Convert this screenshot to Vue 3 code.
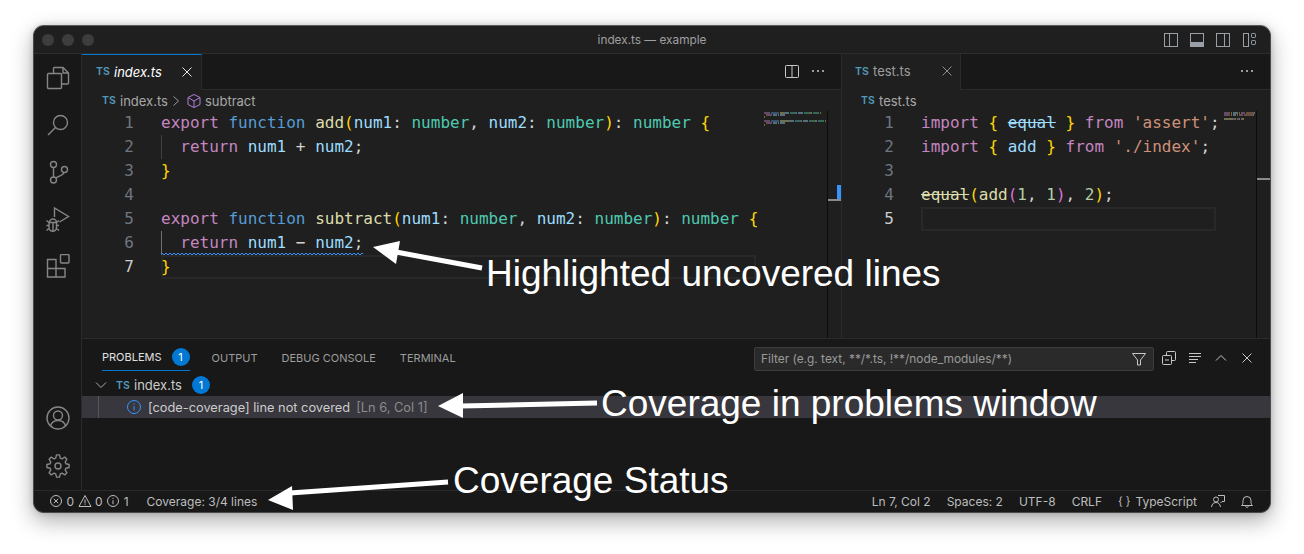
<script setup>
const T = (c, t) => ({ c, t })
const sig = (name) => [
  T('kw', 'export '), T('st', 'function '), T('fn', name), T('br', '('),
  T('va', 'num1'), T('pl', ': '), T('ty', 'number'), T('pl', ', '),
  T('va', 'num2'), T('pl', ': '), T('ty', 'number'), T('br', ')'),
  T('pl', ': '), T('ty', 'number'), T('pl', ' '), T('br', '{'),
]
const leftLines = [
  { tokens: sig('add') },
  { indent: true, tokens: [T('kw', 'return '), T('va', 'num1'), T('pl', ' + '), T('va', 'num2'), T('pl', ';')] },
  { tokens: [T('br', '}')] },
  { tokens: [] },
  { tokens: sig('subtract') },
  { indent: true, active: true, squiggle: true, tokens: [T('kw', 'return '), T('va', 'num1'), T('pl', ' − '), T('va', 'num2'), T('pl', ';')] },
  { current: true, tokens: [T('br', '}')] },
]
const rightLines = [
  { tokens: [T('kw', 'import '), T('br', '{ '), T('va del', 'equal'), T('br', ' }'), T('kw', ' from '), T('str', "'assert'"), T('pl', ';')] },
  { tokens: [T('kw', 'import '), T('br', '{ '), T('va', 'add'), T('br', ' }'), T('kw', ' from '), T('str', "'./index'"), T('pl', ';')] },
  { tokens: [] },
  { tokens: [T('fn del', 'equal'), T('br', '('), T('fn', 'add'), T('br2', '('), T('nu', '1'), T('pl', ', '), T('nu', '1'), T('br2', ')'), T('pl', ', '), T('nu', '2'), T('br', ')'), T('pl', ';')] },
  { current: true, tokens: [] },
]
const panelTabs = ['OUTPUT', 'DEBUG CONSOLE', 'TERMINAL']

const miniColors = { kw: '#c586c0', st: '#569cd6', fn: '#dcdcaa', va: '#9cdcfe', ty: '#4ec9b0', br: '#ffd700', br2: '#da70d6', str: '#ce9178', nu: '#b5cea8', pl: '#d4d4d4' }
// one minimap pixel per character, two pixels per line
function minimap(lines) {
  const rects = []
  lines.forEach((line, y) => {
    let x = line.indent ? 2 : 0
    line.tokens.forEach((tok) => {
      for (const m of tok.t.matchAll(/\S+/g)) {
        rects.push({ x: x + m.index, y: y * 2, w: m[0].length, fill: miniColors[tok.c.split(' ')[0]] })
      }
      x += tok.t.length
    })
  })
  return rects
}
const leftMini = minimap(leftLines)
const rightMini = minimap(rightLines)

// settings gear outline: eight teeth around a centre of (12, 12)
function gearPath() {
  const pts = []
  const teeth = 8
  for (let i = 0; i < teeth; i++) {
    const a = (i * 2 * Math.PI) / teeth - Math.PI / 2
    const step = (2 * Math.PI) / teeth
    const at = (r, da) => `${(12 + r * Math.cos(a + da)).toFixed(2)} ${(12 + r * Math.sin(a + da)).toFixed(2)}`
    pts.push(at(8.2, -step * 0.36), at(11.2, -step * 0.17), at(11.2, step * 0.17), at(8.2, step * 0.36))
  }
  return 'M' + pts.join('L') + 'Z'
}
const gear = gearPath()
</script>

<template>
  <div class="page">
    <div class="window">
      <header class="titlebar">
        <div class="lights"><i></i><i></i><i></i></div>
        <div class="title">index.ts — example</div>
        <div class="layout-icons">
          <svg width="16" height="16" viewBox="0 0 16 16" fill="none" stroke="#9a9fa8"><rect x="1.500" y="1.500" width="13" height="13"/><path d="M6.500 1.500v13"/></svg>
          <svg width="16" height="16" viewBox="0 0 16 16" fill="none" stroke="#9a9fa8"><rect x="1.500" y="1.500" width="13" height="13"/><path d="M1.500 10.500h13v4h-13z" fill="#9a9fa8"/></svg>
          <svg width="16" height="16" viewBox="0 0 16 16" fill="none" stroke="#9a9fa8"><rect x="1.500" y="1.500" width="13" height="13"/><path d="M9.500 1.500v13"/></svg>
          <svg width="16" height="16" viewBox="0 0 16 16" fill="none" stroke="#9a9fa8"><rect x="2.500" y="1.500" width="5" height="13"/><rect x="10.500" y="1.500" width="4" height="4" rx=".8"/><rect x="10.500" y="8.500" width="4" height="4" rx=".8"/></svg>
        </div>
      </header>

      <div class="main">
        <nav class="activity">
          <div class="activity-top">
            <svg width="24" height="24" viewBox="0 0 24 24" fill="none"><path d="M7.500 7V2.500a1 1 0 0 1 1-1h8.500l5.500 5.500v10a1 1 0 0 1-1 1h-6.500M17 1.500V7h5.500"/><rect x="1.500" y="7.500" width="14" height="15" rx="1"/></svg>
            <svg width="24" height="24" viewBox="0 0 24 24" fill="none"><circle cx="14.500" cy="9.500" r="7"/><path d="M9.500 14.500 2 22"/></svg>
            <svg width="24" height="24" viewBox="0 0 24 24" fill="none"><circle cx="7.500" cy="4.500" r="3"/><circle cx="7.500" cy="20" r="3"/><circle cx="18.500" cy="9.500" r="3"/><path d="M7.500 7.500v9.500M18 12.500c-.5 3-5.500 3.500-8 5.500"/></svg>
            <svg width="24" height="25" viewBox="0 0 24 25" fill="none"><path d="M8.500 10V1l14 8.500-9 5.500"/><path d="M3.500 15.500a3.500 3.500 0 0 1 7 0zM3 15.500v5a3.500 3.500 0 0 0 7.500 0v-5M7 15.500v8.500M.5 13.500l2.500 2M13 13.500l-2.500 2M.5 18.500H3M10.500 18.500H13M.5 23.500 3.500 21M13 23.500 10 21"/></svg>
            <svg class="ext" width="24" height="24" viewBox="0 0 24 24" fill="none"><path d="M1.500 5.500H10v9h9v8.500H1.500zM1.500 14.500H10V23"/><rect x="14.500" y=".5" width="8.500" height="8.500" rx="1"/></svg>
          </div>
          <div class="activity-bottom">
            <svg width="24" height="24" viewBox="0 0 24 24" fill="none"><circle cx="12" cy="12" r="11"/><circle cx="12" cy="9.500" r="4.500"/><path d="M4.500 20c1-4 4-5.500 7.500-5.500s6.500 1.500 7.500 5.500"/></svg>
            <svg width="24" height="24" viewBox="0 0 24 24" fill="none" stroke-linejoin="round"><circle cx="12" cy="12" r="3"/><path :d="gear"/></svg>
          </div>
        </nav>

        <div class="workspace">
          <div class="editors">
            <section class="group group-left">
              <div class="tabs">
                <div class="tab active"><span class="ts">TS</span><em>index.ts</em>
                  <svg class="close" width="16" height="16" viewBox="0 0 16 16" fill="none" stroke="#e8e8e8"><path d="m3.500 3.500 9 9M12.500 3.500l-9 9"/></svg>
                </div>
                <div class="tabs-actions">
                  <svg width="16" height="16" viewBox="0 0 16 16" fill="none" stroke="#c8c8c8"><rect x="1.500" y="2.500" width="13" height="12" rx=".8"/><path d="M8 2.500v12"/></svg>
                  <svg width="16" height="16" viewBox="0 0 16 16" fill="#c8c8c8"><circle cx="3" cy="8" r="1"/><circle cx="8" cy="8" r="1"/><circle cx="13" cy="8" r="1"/></svg>
                </div>
              </div>
              <div class="crumbs"><span class="ts">TS</span><span>index.ts</span>
                <svg width="10" height="14" viewBox="0 0 10 14" fill="none" stroke="#9a9a9a"><path d="m2.500 2.500 5 4.500-5 4.500"/></svg>
                <svg class="cube" width="16" height="16" viewBox="0 0 16 16" fill="none" stroke="#b180d7"><path d="M8 1.500 14 4.500v7l-6 3-6-3v-7zM2 4.500 8 8l6-3.500M8 8v6.500"/></svg>
                <span>subtract</span></div>
              <div class="editor-body">
                <div class="numbers"><div v-for="(l, i) in leftLines" :key="i" :class="{ 'num-current': l.current }">{{ i + 1 }}</div></div>
                <div class="code">
                  <div v-for="(l, i) in leftLines" :key="i" class="line" :class="{ current: l.current }">
                    <span class="line-text"><span v-if="l.indent" class="indent" :class="{ 'indent-active': l.active }"></span><span v-for="(t, j) in l.tokens" :key="j" :class="t.c">{{ t.t }}</span>
                      <svg v-if="l.squiggle" class="wave" width="100%" height="4"><defs><pattern id="wave" width="4" height="4" patternUnits="userSpaceOnUse"><path d="M0 2Q1 0 2 2T4 2" fill="none" stroke="#3794ff"/></pattern></defs><rect width="100%" height="4" fill="url(#wave)"/></svg>
                    </span>
                  </div>
                </div>
                <div class="minimap">
                  <svg width="64" height="16" viewBox="0 0 64 16"><rect v-for="(r, i) in leftMini" :key="i" :x="r.x" :y="r.y" :width="r.w" height="2" :fill="r.fill" opacity=".42"/></svg>
                </div>
                <div class="ruler"><b class="ruler-info"></b><b class="ruler-pos ruler-pos-left"></b></div>
              </div>
            </section>

            <section class="group group-right">
              <div class="tabs">
                <div class="tab inactive"><span class="ts">TS</span><span>test.ts</span>
                  <svg class="close" width="16" height="16" viewBox="0 0 16 16" fill="none" stroke="#8c8c8c"><path d="m3.500 3.500 9 9M12.500 3.500l-9 9"/></svg>
                </div>
                <div class="tabs-actions">
                  <svg width="16" height="16" viewBox="0 0 16 16" fill="#c8c8c8"><circle cx="3" cy="8" r="1"/><circle cx="8" cy="8" r="1"/><circle cx="13" cy="8" r="1"/></svg>
                </div>
              </div>
              <div class="crumbs crumbs-right"><span class="ts">TS</span><span>test.ts</span></div>
              <div class="editor-body">
                <div class="numbers"><div v-for="(l, i) in rightLines" :key="i" :class="{ 'num-current': l.current }">{{ i + 1 }}</div></div>
                <div class="code">
                  <div v-for="(l, i) in rightLines" :key="i" class="line" :class="{ current: l.current }"><span v-for="(t, j) in l.tokens" :key="j" :class="t.c">{{ t.t }}</span></div>
                </div>
                <div class="minimap">
                  <svg width="32" height="10" viewBox="0 0 32 10"><rect v-for="(r, i) in rightMini" :key="i" :x="r.x" :y="r.y" :width="r.w" height="2" :fill="r.fill" opacity=".42"/></svg>
                </div>
                <div class="ruler"><b class="ruler-pos ruler-pos-right"></b></div>
              </div>
            </section>
          </div>

          <section class="panel">
            <div class="panel-head">
              <div class="panel-tab selected">PROBLEMS<span class="badge">1</span></div>
              <div v-for="t in panelTabs" :key="t" class="panel-tab">{{ t }}</div>
              <div class="filter">
                <span>Filter (e.g. text, **/*.ts, !**/node_modules/**)</span>
                <svg width="16" height="16" viewBox="0 0 16 16" fill="none" stroke="#c8c8c8"><path d="M1.500 2.500h13L9.500 9v5h-3V9z"/></svg>
              </div>
              <div class="panel-actions">
                <svg width="16" height="16" viewBox="0 0 16 16" fill="none" stroke="#c8c8c8"><rect x="1.500" y="5.500" width="9" height="9" rx="1"/><path d="M5.500 5V2.500a1 1 0 0 1 1-1h7a1 1 0 0 1 1 1v7a1 1 0 0 1-1 1H11M4 10h4"/></svg>
                <svg width="16" height="16" viewBox="0 0 16 16" fill="none" stroke="#c8c8c8"><path d="M2 3.500h12M2 6.500h12M2 9.500h9M2 12.500h7"/></svg>
                <svg width="16" height="16" viewBox="0 0 16 16" fill="none" stroke="#c8c8c8"><path d="m3 10.500 5-5 5 5"/></svg>
                <svg width="16" height="16" viewBox="0 0 16 16" fill="none" stroke="#c8c8c8"><path d="m3.500 3.500 9 9M12.500 3.500l-9 9"/></svg>
              </div>
            </div>
            <div class="tree-file">
              <svg width="16" height="16" viewBox="0 0 16 16" fill="none" stroke="#a8a8a8"><path d="m3 5.500 5 5 5-5"/></svg>
              <span class="ts">TS</span><span>index.ts</span><span class="badge">1</span>
            </div>
            <div class="tree-row">
              <i class="tree-guide"></i>
              <svg width="16" height="16" viewBox="0 0 16 16" fill="none" stroke="#3794ff"><circle cx="8" cy="8" r="6.500"/><path d="M8 7v4.500M8 4.500v1.200"/></svg>
              <span>[code-coverage] line not covered</span><span class="dim">[Ln 6, Col 1]</span>
            </div>
          </section>
        </div>
      </div>

      <footer class="status">
        <div class="status-left">
          <span class="st-item">
            <svg width="14" height="14" viewBox="0 0 14 14" fill="none" stroke="#bdbdbd"><circle cx="7" cy="7" r="5.500"/><path d="m4.800 4.800 4.400 4.400M9.200 4.800 4.800 9.200"/></svg>0
            <svg width="14" height="14" viewBox="0 0 14 14" fill="none" stroke="#bdbdbd"><path d="M7 1.500 13 12.500H1zM7 5.500v4M7 10.300v.9"/></svg>0
            <svg width="14" height="14" viewBox="0 0 14 14" fill="none" stroke="#bdbdbd"><circle cx="7" cy="7" r="5.500"/><path d="M7 6.200v4M7 3.800v1"/></svg>1
          </span>
          <span>Coverage: 3/4 lines</span>
        </div>
        <div class="status-right">
          <span>Ln 7, Col 2</span><span>Spaces: 2</span><span>UTF-8</span><span>CRLF</span>
          <span class="lang"><span class="braces">{ }</span>TypeScript</span>
          <svg width="16" height="16" viewBox="0 0 16 16" fill="none" stroke="#bdbdbd"><circle cx="6" cy="6.500" r="2.500"/><path d="M1.500 14c.5-3 2-4.500 4.500-4.500s4 1.500 4.500 4.500M8 2.500h6.500v6H12L10.500 10"/></svg>
          <svg width="16" height="16" viewBox="0 0 16 16" fill="none" stroke="#bdbdbd"><path d="M2.500 12.500c1.500-1 1.500-2.500 1.500-5a4 4 0 0 1 8 0c0 2.500 0 4 1.500 5zM6.500 13.500c.3 1 2.700 1 3 0"/></svg>
        </div>
      </footer>

      <svg class="arrows" width="1236" height="486" viewBox="0 0 1236 486">
        <g fill="#fff" stroke="#fff">
          <path d="M448 242 362 226" stroke-width="5"/><path d="M339 221 366 215 362 238z" stroke-width="0"/>
          <path d="M563 377 427 380" stroke-width="5"/><path d="M404 380 429 367V392z" stroke-width="0"/>
          <path d="M414 456 256 467" stroke-width="5"/><path d="M234 474 258 460 259 484z" stroke-width="0"/>
        </g>
      </svg>
      <div class="note note-1">Highlighted uncovered lines</div>
      <div class="note note-2">Coverage in problems window</div>
      <div class="note note-3">Coverage Status</div>
    </div>
  </div>
</template>

<style scoped>
.page {
  width: 1304px;
  height: 554px;
  box-sizing: border-box;
  padding: 25px 33px 41px;
  background: #fff;
  overflow: hidden;
}
.window {
  position: relative;
  height: 488px;
  box-sizing: border-box;
  display: flex;
  flex-direction: column;
  border: 1px solid #4a4a4a;
  border-top-color: #5a5a5a;
  border-radius: 11px;
  background: #181818;
  box-shadow: 0 8px 22px rgba(0, 0, 0, .32), 0 0 6px rgba(0, 0, 0, .16);
  overflow: hidden;
  font-family: Inter, "Liberation Sans", sans-serif;
  color: #ccc;
}
.titlebar {
  height: 27px;
  flex: none;
  display: flex;
  align-items: center;
  position: relative;
  background: #1f1f1f;
  border-bottom: 1px solid #2c2c2c;
}
.lights { display: flex; gap: 8px; padding-left: 8px; }
.lights i { width: 12px; height: 12px; border-radius: 50%; background: #3d3d3d; }
.title {
  position: absolute;
  left: 0;
  right: 0;
  text-align: center;
  font-size: 11.800px;
  color: #a0a0a0;
}
.layout-icons { margin-left: auto; margin-right: 13px; display: flex; gap: 10px; }

.main { flex: 1; min-height: 0; display: flex; }
.activity {
  width: 48px;
  flex: none;
  display: flex;
  flex-direction: column;
  justify-content: space-between;
  align-items: center;
  background: #181818;
  border-right: 1px solid #2b2b2b;
  box-sizing: border-box;
  padding: 12px 0 12px;
}
.activity svg { stroke: #868686; stroke-width: 1.400; display: block; }
.activity-top { display: flex; flex-direction: column; align-items: center; gap: 23px; }
.activity-bottom { display: flex; flex-direction: column; align-items: center; gap: 24px; }
.ext { margin-top: -1px; }

.workspace { flex: 1; min-width: 0; display: flex; flex-direction: column; }
.editors { height: 285px; flex: none; display: flex; border-bottom: 1px solid #2b2b2b; box-sizing: border-box; }
.group { display: flex; flex-direction: column; min-width: 0; background: #1f1f1f; }
.group-left { width: 759px; flex: none; }
.group-right { flex: 1; border-left: 1px solid #2b2b2b; }

.tabs { height: 36px; flex: none; display: flex; background: #181818; border-bottom: 1px solid #2b2b2b; box-sizing: border-box; }
.tab {
  height: 36px;
  box-sizing: border-box;
  display: flex;
  align-items: center;
  padding: 0 4px 2px 14px;
  font-size: 13px;
  background: #1f1f1f;
  border-right: 1px solid #2b2b2b;
}
.tab.active { width: 120px; border-top: 1px solid #0078d4; color: #fff; }
.tab.inactive { width: 119px; padding-left: 13px; padding-right: 3px; color: #9d9d9d; }
.tab em { font-style: italic; }
.tab .close { margin-left: auto; margin-right: 2px; }
.ts { width: 12px; flex: none; color: #519aba; font-size: 10.500px; font-weight: 600; margin-right: 6px; white-space: nowrap; }
.tabs-actions { margin-left: auto; display: flex; align-items: center; gap: 10px; padding: 0 15px 2px 0; }

.crumbs {
  height: 21px;
  flex: none;
  display: flex;
  align-items: center;
  padding-left: 20px;
  font-size: 13px;
  color: #a8a8a8;
}
.crumbs-right { padding-left: 19px; }
.crumbs svg { margin: 0 3px; }
.crumbs .cube { margin: 0 3px 0 2px; }

.editor-body {
  flex: 1;
  min-height: 0;
  display: flex;
  font-family: "DejaVu Sans Mono", monospace;
  font-size: 16px;
  line-height: 24px;
  position: relative;
}
.numbers { width: 52px; flex: none; text-align: right; color: #6e7681; }
.num-current { color: #cccccc; }
.code { flex: 1; min-width: 0; margin-left: 27px; white-space: pre; color: #d4d4d4; }
.line { height: 24px; box-sizing: border-box; }
.line.current { box-shadow: inset 0 0 0 2px #282828; }
.line-text { display: inline-block; position: relative; height: 24px; vertical-align: top; }
.wave { position: absolute; left: 0; top: 21px; display: block; }
.indent {
  display: inline-block;
  width: 2ch;
  height: 24px;
  vertical-align: top;
  box-shadow: inset 1px 0 0 #404040;
}
.indent-active { box-shadow: inset 1px 0 0 #707070; }
.kw { color: #c586c0; }
.st { color: #569cd6; }
.fn { color: #dcdcaa; }
.va { color: #9cdcfe; }
.ty { color: #4ec9b0; }
.br { color: #ffd700; }
.br2 { color: #da70d6; }
.str { color: #ce9178; }
.nu { color: #b5cea8; }
.pl { color: #d4d4d4; }
.del { text-decoration: line-through; }
.minimap { width: 71px; flex: none; padding: 1px 0 0 8px; box-sizing: border-box; line-height: 0; }
.group-right .minimap { width: 40px; }
.ruler { width: 14px; flex: none; position: relative; border-left: 1px solid #0c0c0c; box-sizing: border-box; }
.ruler-info { position: absolute; right: 0; top: 74px; width: 4px; height: 15px; background: #3794ff; }
.ruler-pos { position: absolute; left: 0; right: 0; height: 2px; background: #8a8a8a; }
.ruler-pos-left { top: 88px; }
.ruler-pos-right { top: 67px; }

.panel { flex: 1; min-height: 0; background: #181818; font-size: 13px; }
.panel-head { height: 35px; box-sizing: border-box; display: flex; align-items: center; padding: 2px 0 0 20px; gap: 24px; }
.panel-tab { font-size: 11px; color: #9d9d9d; height: 26px; box-sizing: border-box; display: flex; align-items: center; }
.panel-tab.selected { color: #e0e0e0; border-bottom: 1px solid #0078d4; margin-right: -2px; }
.badge {
  display: inline-flex;
  align-items: center;
  justify-content: center;
  width: 18px;
  height: 18px;
  margin-left: 10px;
  border-radius: 50%;
  background: #0078d4;
  color: #fff;
  font-size: 11px;
}
.filter {
  margin: 2px 0 0 auto;
  width: 400px;
  height: 24px;
  box-sizing: border-box;
  display: flex;
  align-items: center;
  justify-content: space-between;
  padding: 0 6px;
  background: #2a2a2a;
  border: 1px solid #3c3c3c;
  border-radius: 2px;
  font-size: 11.900px;
  color: #9a9a9a;
}
.panel-actions { display: flex; gap: 10px; padding-right: 15px; margin-left: -17px; }
.tree-file { height: 22px; display: flex; align-items: center; padding-left: 11px; color: #ccc; }
.tree-file .ts { margin: 0 6px 0 7px; }
.tree-file .badge { margin-left: 10px; }
.tree-row {
  height: 22px;
  display: flex;
  align-items: center;
  position: relative;
  padding-left: 44px;
  background: #37373d;
  font-size: 12.800px;
  color: #ccc;
}
.tree-row svg { margin-right: 6px; }
.tree-guide { position: absolute; left: 16px; top: 0; bottom: 0; width: 1px; background: #585858; }
.dim { color: #8c8c8c; margin-left: 6px; }

.status {
  height: 22px;
  flex: none;
  display: flex;
  align-items: center;
  justify-content: space-between;
  background: #181818;
  border-top: 1px solid #2b2b2b;
  box-sizing: border-box;
  font-size: 12px;
  color: #bdbdbd;
  padding: 0 15px 1px;
}
.status-left, .status-right { display: flex; align-items: center; }
.status-left { gap: 18px; }
.status-right { gap: 16px; }
.status-right svg { margin-left: -3px; }
.st-item { display: inline-flex; align-items: center; gap: 3.500px; }
.lang { display: inline-flex; align-items: center; }
.braces { margin-right: 5px; font-size: 11px; }

.arrows { position: absolute; left: 0; top: 0; pointer-events: none; }
.note {
  position: absolute;
  font-family: "Liberation Sans", Arial, sans-serif;
  font-size: 37px;
  line-height: 40px;
  color: #fff;
  white-space: nowrap;
}
.note-1 { left: 452px; top: 228px; }
.note-2 { left: 567px; top: 358px; }
.note-3 { left: 419px; top: 435px; }
</style>
<style>
html, body { margin: 0; background: #fff; }
</style>
